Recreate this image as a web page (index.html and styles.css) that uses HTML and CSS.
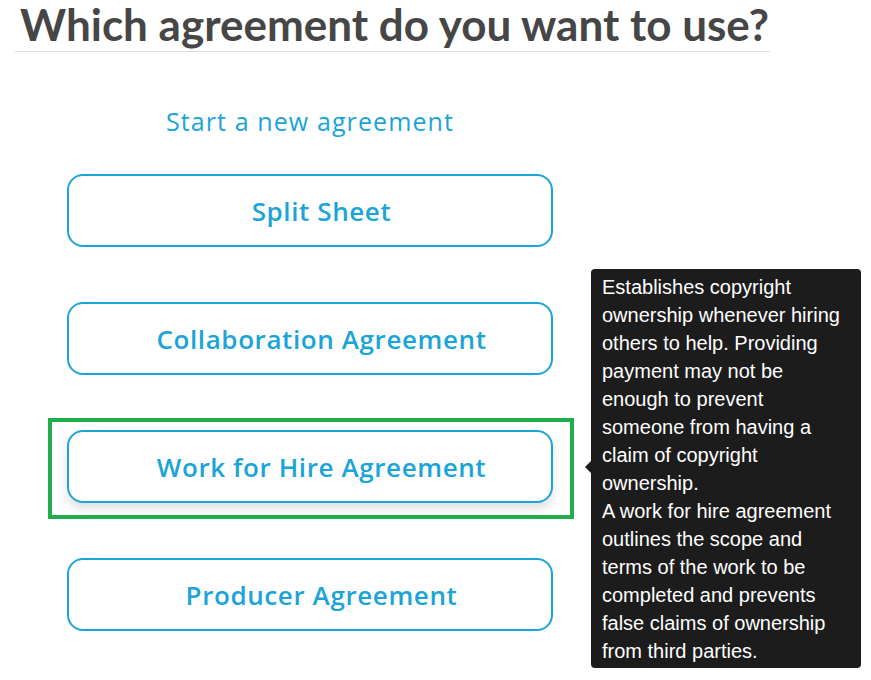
FILE: index.html
```html
<!DOCTYPE html>
<html>
<head>
<meta charset="utf-8">
<link rel="stylesheet" href="styles.css">
</head>
<body>
<div class="page">
  <h1 class="title">Which agreement do you want to use?</h1>
  <div class="options">
    <div class="subtitle">Start a new agreement</div>
    <button class="option">Split Sheet</button>
    <button class="option">Collaboration Agreement</button>
    <div class="highlight">
      <button class="option option-hover">Work for Hire Agreement</button>
    </div>
    <button class="option">Producer Agreement</button>
  </div>
  <div class="tooltip">
    Establishes copyright ownership whenever hiring others to help. Providing payment may not be enough to prevent someone from having a claim of copyright ownership.<br>A work for hire agreement outlines the scope and terms of the work to be completed and prevents false claims of ownership from third parties.
  </div>
</div>
</body>
</html>
```
FILE: styles.css
```css
* { box-sizing: border-box; }
html, body { margin: 0; padding: 0; background: #fff; }
.page {
  position: relative;
  width: 871px;
  height: 680px;
  padding-left: 15px;
  overflow: hidden;
}
.title {
  width: 755px;
  margin: 0;
  padding: 1px 0 4px 5px;
  font-family: "Lato", "Noto Sans", sans-serif;
  font-weight: 700;
  font-size: 44px;
  line-height: 46px;
  color: #464646;
  border-bottom: 1px solid #dcdcdc;
  white-space: nowrap;
}
.options {
  margin: 0 0 0 52px;
  width: 486px;
  display: flex;
  flex-direction: column;
  gap: 55px;
  padding-top: 51px;
}
.subtitle {
  font-family: "Open Sans", "Noto Sans", sans-serif;
  font-size: 25px;
  line-height: 36px;
  letter-spacing: 1.1px;
  color: #1ba4d8;
  text-align: center;
  margin-bottom: -20px;
}
.option {
  display: block;
  width: 486px;
  height: 73px;
  border: 2px solid #1ba4d8;
  border-radius: 16px;
  background: #fff;
  color: #1ba4d8;
  font-family: "Open Sans", "Noto Sans", sans-serif;
  font-weight: 600;
  font-size: 26px;
  letter-spacing: 0.6px;
  padding: 0 0 0 23px;
  text-align: center;
  cursor: pointer;
}
.option-hover {
  box-shadow: 0 6px 10px rgba(0,0,0,0.12);
}
.highlight {
  position: relative;
}
.highlight::after {
  content: "";
  position: absolute;
  top: -12px;
  left: -19px;
  right: -21px;
  bottom: -16px;
  border: 4px solid #22ad4b;
  pointer-events: none;
}
.tooltip {
  position: absolute;
  left: 591px;
  top: 269px;
  width: 270px;
  padding: 4px 10px 3px 11px;
  background: #1c1c1c;
  color: #fff;
  border-radius: 4px;
  font-family: "Liberation Sans", Arial, sans-serif;
  font-size: 20px;
  line-height: 28px;
}
.tooltip::before {
  content: "";
  position: absolute;
  left: -6px;
  top: 192px;
  border-style: solid;
  border-width: 6px 6px 6px 0;
  border-color: transparent #1c1c1c transparent transparent;
}
```
